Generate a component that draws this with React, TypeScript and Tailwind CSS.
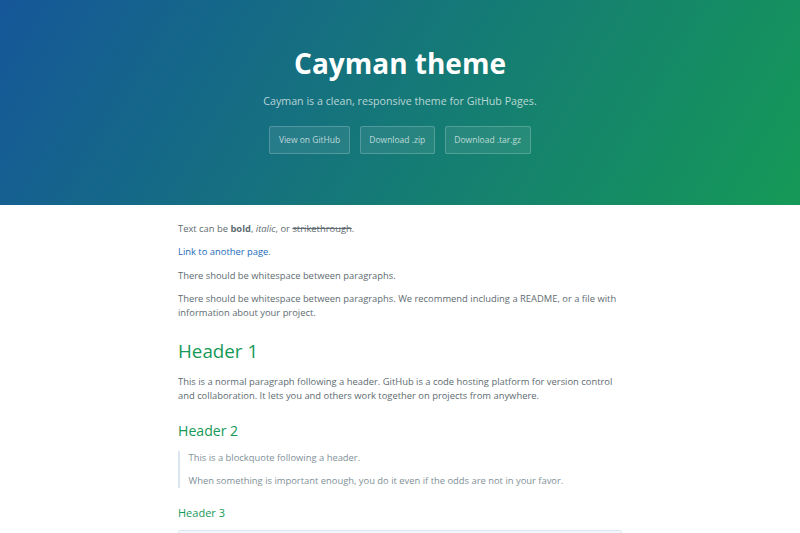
const buttons = ['View on GitHub', 'Download .zip', 'Download .tar.gz'];

export default function App() {
  return (
    <div className="min-h-screen bg-white font-['Open_Sans','Noto_Sans',sans-serif] text-[#606c71]">
      {/* Page header */}
      <header className="bg-[linear-gradient(120deg,#155799,#159957)] pt-[42px] pb-[51px] text-center text-white">
        <h1 className="text-[28px] font-bold leading-[42px]">Cayman theme</h1>
        <h2 className="mt-[9px] text-[10.7px] leading-[16px] text-white/70">
          Cayman is a clean, responsive theme for GitHub Pages.
        </h2>
        <div className="mt-[17px] flex justify-center gap-[10px]">
          {buttons.map((label) => (
            <a
              key={label}
              href="#"
              className="rounded-[2.6px] border border-white/20 bg-white/[0.08] px-[8.5px] py-[6.5px] text-[8.5px] leading-[12.8px] text-white/70"
            >
              {label}
            </a>
          ))}
        </div>
      </header>

      {/* Main content */}
      <main className="mx-auto w-[444px] pt-[17px] text-[9.4px] leading-[14.1px]">
        <p>
          Text can be <b className="font-bold">bold</b>, <i>italic</i>, or <s>strikethrough</s>.
        </p>
        <p className="mt-[9.4px]">
          <a href="#" className="text-[#1e6bb8]">
            Link to another page
          </a>
          .
        </p>
        <p className="mt-[9.4px]">There should be whitespace between paragraphs.</p>
        <p className="mt-[9.4px]">
          There should be whitespace between paragraphs. We recommend including a README, or a
          file with information about your project.
        </p>

        <h1 className="mt-[17px] text-[18.8px] font-normal leading-[28.2px] text-[#159957]">
          Header 1
        </h1>
        <p className="mt-[9.4px]">
          This is a normal paragraph following a header. GitHub is a code hosting platform for
          version control and collaboration. It lets you and others work together on projects
          from anywhere.
        </p>

        <h2 className="mt-[17px] text-[14.1px] font-normal leading-[21.1px] text-[#159957]">
          Header 2
        </h2>
        <blockquote className="mt-[9.4px] border-l-[2.6px] border-[#dce6f0] px-[8.5px] text-[#819198]">
          <p>This is a blockquote following a header.</p>
          <p className="mt-[9.4px]">
            When something is important enough, you do it even if the odds are not in your favor.
          </p>
        </blockquote>

        <h3 className="mt-[17px] text-[11px] font-normal leading-[16.5px] text-[#159957]">
          Header 3
        </h3>
        <pre className="mt-[8.5px] mb-[17px] rounded-[2.6px] border border-[#dce6f0] bg-[#f3f6fa] px-[6.8px] pt-[10px] pb-[6.8px] font-['Liberation_Mono',monospace] text-[7.5px] leading-[11px] text-[#567482]">
          {`// Javascript code with syntax highlighting.
var fun = function lang(l) {
  dateformat.i18n = require('./lang/' + l)
  return true;
}`}
        </pre>
      </main>
    </div>
  );
}
